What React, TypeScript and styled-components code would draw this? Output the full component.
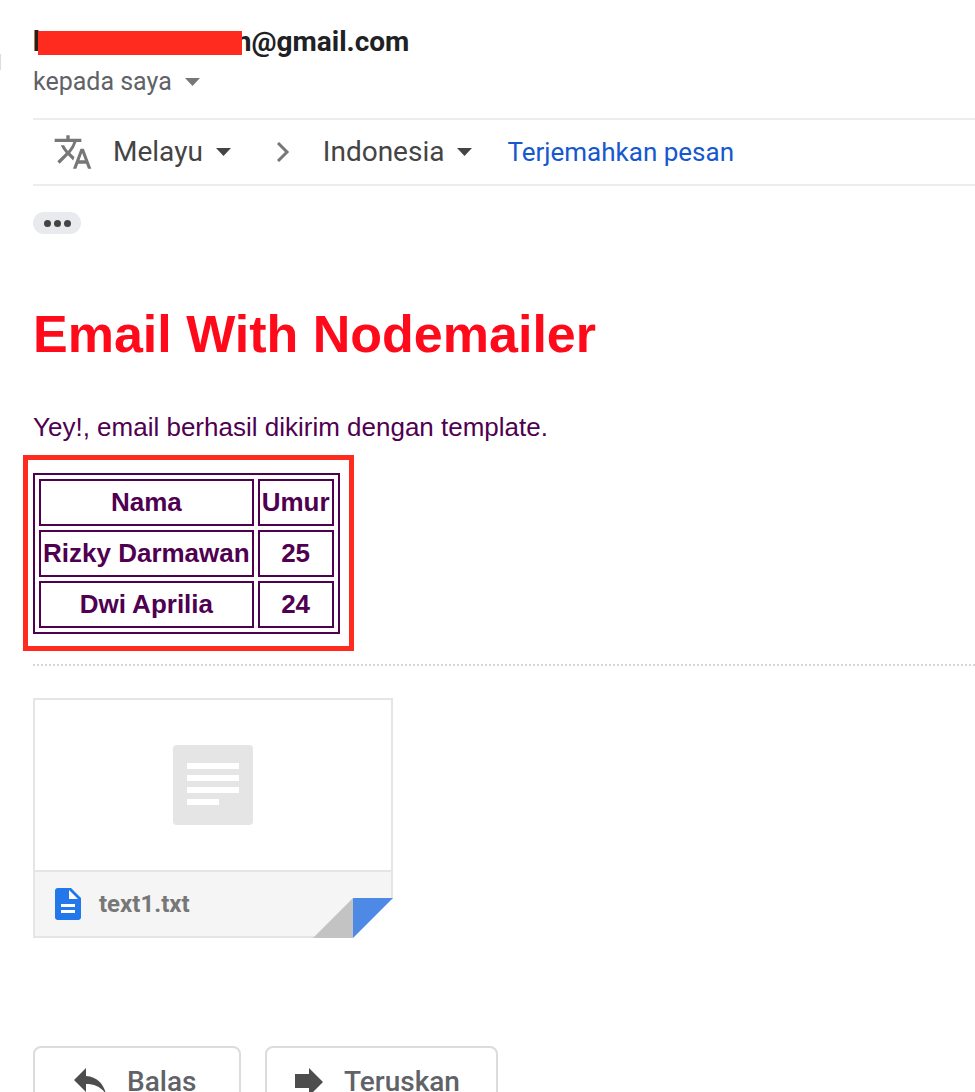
import React from "react";
import styled, { createGlobalStyle } from "styled-components";

const GlobalStyle = createGlobalStyle`
  *, *::before, *::after { box-sizing: border-box; }
  body { margin: 0; background: #fff; font-family: Roboto, sans-serif; color: #222; }
`;

const Page = styled.main`
  height: 100vh;
  overflow-y: auto;
  overflow-x: hidden;
  scrollbar-width: none;
  padding: 24px 0 0 33px;
`;

const Header = styled.header`
  position: relative;
  display: flex;
  flex-direction: column;
`;

const AvatarEdge = styled.span`
  position: absolute;
  left: -33px;
  top: 30px;
  width: 1px;
  height: 16px;
  background: #dcdcdc;
`;

const Sender = styled.h2`
  margin: 0;
  font-size: 28px;
  line-height: 36px;
  font-weight: 700;
  color: #202124;
  white-space: nowrap;
`;

const Redaction = styled.span`
  position: relative;
  display: inline-block;
  width: 204px;
  height: 24px;
  margin: 0 -6px 0 -11px;
  vertical-align: -4px;
  background: #fe2b1e;
`;

const Recipient = styled.button`
  display: flex;
  align-items: center;
  align-self: flex-start;
  gap: 13px;
  margin-top: 6px;
  padding: 0;
  border: 0;
  background: none;
  font: 400 25px/32px Roboto, sans-serif;
  color: #5f6368;
`;

const TranslateBar = styled.section`
  display: flex;
  align-items: center;
  height: 68px;
  margin-top: 20px;
  padding-left: 20px;
  border-top: 2px solid #ebeef1;
  border-bottom: 2px solid #ebeef1;
`;

const LanguageField = styled.label`
  position: relative;
  display: flex;
  align-items: center;
  gap: 13px;
`;

const Language = styled.select`
  appearance: none;
  field-sizing: content;
  padding: 0;
  border: 0;
  background: none;
  font: 400 28px/36px Roboto, sans-serif;
  color: #444;
`;

const TranslateIcon = styled.svg`
  width: 40px;
  height: 40px;
  margin-right: 20px;
  fill: #777;
`;

const ChevronIcon = styled.svg`
  width: 14px;
  height: 20px;
  margin: 0 33px 0 45px;
  fill: none;
  stroke: #777;
  stroke-width: 3;
`;

const TranslateLink = styled.a`
  margin-left: 35px;
  font-size: 26px;
  line-height: 36px;
  color: #1558d0;
  text-decoration: none;
  white-space: nowrap;
`;

const MoreButton = styled.button`
  display: flex;
  align-items: center;
  justify-content: center;
  gap: 3px;
  width: 48px;
  height: 22px;
  margin-top: 26px;
  padding: 0;
  border: 0;
  border-radius: 11px;
  background: #e8eaed;
`;

const Dot = styled.span`
  width: 7px;
  height: 7px;
  border-radius: 50%;
  background: #444;
`;

const Message = styled.article`
  padding: 61px 0 30px;
  border-bottom: 2px dotted #d8d8d8;
  font-family: "Liberation Sans", Arial, sans-serif;
  font-size: 26px;
  line-height: 39px;
  color: #500050;
`;

const Title = styled.h1`
  margin: 0;
  font-size: 52px;
  line-height: 78px;
  font-weight: 700;
  color: #ff0a1a;
`;

const Paragraph = styled.p`
  margin: 35px 0 26px;
`;

const Highlight = styled.div`
  position: relative;
  width: fit-content;

  &::after {
    content: "";
    position: absolute;
    inset: -18px -14px -17px -10px;
    border: 5px solid #fe2b1e;
    pointer-events: none;
  }
`;

const Table = styled.table`
  border: 2px solid #500050;
  border-collapse: separate;
  border-spacing: 4px;

  th {
    padding: 2px;
    border: 2px solid #500050;
    font-weight: 700;
    text-align: center;
    white-space: nowrap;
  }
`;

const Attachment = styled.a`
  position: relative;
  display: flex;
  flex-direction: column;
  width: 360px;
  height: 240px;
  margin-top: 32px;
  border: 2px solid #e5e5e5;
  color: #777;
  text-decoration: none;
`;

const Preview = styled.div`
  display: flex;
  flex: 1;
  align-items: center;
  justify-content: center;
`;

const FileBar = styled.div`
  display: flex;
  align-items: center;
  gap: 18px;
  height: 66px;
  padding-left: 20px;
  border-top: 2px solid #e5e5e5;
  background: #f5f5f5;
  font-size: 24px;
  font-weight: 700;
`;

const Fold = styled.svg`
  position: absolute;
  right: -2px;
  bottom: -2px;
  width: 80px;
  height: 40px;
`;

const Actions = styled.footer`
  display: flex;
  gap: 24px;
  margin-top: 108px;
`;

const Action = styled.button<{ $inset: number; $width: number }>`
  display: flex;
  align-items: center;
  gap: 21px;
  min-width: ${(p) => p.$width}px;
  height: 72px;
  padding: 0 0 0 ${(p) => p.$inset}px;
  border: 2px solid #dadce0;
  border-radius: 8px;
  background: #fff;
  font: 500 28px/36px Roboto, sans-serif;
  color: #5f6368;

  svg { fill: #4d4d4d; }
`;

const Caret = ({ color }: { color: string }) => (
  <svg width="15" height="8" viewBox="0 0 16 8" preserveAspectRatio="none" aria-hidden="true">
    <path d="M0 0h16L8 8z" fill={color} />
  </svg>
);

const people = [
  ["Rizky Darmawan", "25"],
  ["Dwi Aprilia", "24"],
];

export default function App() {
  return (
    <Page>
      <GlobalStyle />
      <Header>
        <AvatarEdge />
        <Sender>h<Redaction />n@gmail.com</Sender>
        <Recipient type="button">kepada saya <Caret color="#777" /></Recipient>
      </Header>

      <TranslateBar>
        <TranslateIcon viewBox="0 0 24 24" aria-hidden="true">
          <path d="M12.87 15.07l-2.54-2.51.03-.03A17.52 17.52 0 0 0 14.07 6H17V4h-7V2H8v2H1v1.99h11.17C11.5 7.92 10.44 9.75 9 11.35 8.07 10.32 7.3 9.19 6.69 8h-2c.73 1.63 1.73 3.17 2.98 4.56l-5.09 5.02L4 19l5-5 3.11 3.11.76-2.04zM18.5 10h-2L12 22h2l1.12-3h4.75L21 22h2l-4.5-12zm-2.62 7l1.62-4.33L19.12 17h-3.24z" />
        </TranslateIcon>
        <LanguageField>
          <Language aria-label="Melayu" defaultValue="Melayu"><option>Melayu</option></Language>
          <Caret color="#444" />
        </LanguageField>
        <ChevronIcon viewBox="0 0 14 20" aria-hidden="true"><path d="M2 1l9 9-9 9" /></ChevronIcon>
        <LanguageField>
          <Language aria-label="Indonesia" defaultValue="Indonesia"><option>Indonesia</option></Language>
          <Caret color="#444" />
        </LanguageField>
        <TranslateLink href="#translate">Terjemahkan pesan</TranslateLink>
      </TranslateBar>

      <MoreButton type="button" aria-label="More"><Dot /><Dot /><Dot /></MoreButton>

      <Message>
        <Title>Email With Nodemailer</Title>
        <Paragraph>Yey!, email berhasil dikirim dengan template.</Paragraph>
        <Highlight>
          <Table>
            <thead><tr><th scope="col">Nama</th><th scope="col">Umur</th></tr></thead>
            <tbody>
              {people.map(([name, age]) => (
                <tr key={name}><th scope="row">{name}</th><th>{age}</th></tr>
              ))}
            </tbody>
          </Table>
        </Highlight>
      </Message>

      <Attachment href="#text1">
        <Preview>
          <svg width="80" height="80" viewBox="0 0 80 80" aria-hidden="true">
            <rect width="80" height="80" rx="4" fill="#e5e5e5" />
            <path d="M14 18h52v6H14zM14 30h52v6H14zM14 42h52v6H14zM14 54h32v6H14z" fill="#fff" />
          </svg>
        </Preview>
        <FileBar>
          <svg width="26" height="32" viewBox="0 0 26 32" aria-hidden="true">
            <path d="M3 0h13l10 10v19a3 3 0 0 1-3 3H3a3 3 0 0 1-3-3V3a3 3 0 0 1 3-3z" fill="#2277ea" />
            <path d="M14 2v9h9zM6 16h14v3H6zM6 22h14v3H6z" fill="#fff" />
          </svg>
          text1.txt
        </FileBar>
        <Fold viewBox="0 0 80 40" aria-hidden="true">
          <path d="M80 0v40H40z" fill="#fff" />
          <path d="M40 0v40H0z" fill="#c3c3c3" />
          <path d="M40 0h40L40 40z" fill="#4d89e5" />
        </Fold>
      </Attachment>

      <Actions>
        <Action type="button" $inset={39} $width={208}>
          <svg width="32" height="28" viewBox="0 0 32 28" aria-hidden="true">
            <path d="M12 8V0L0 12l12 12v-8c9 0 15 3 20 10C30 17 24 9 12 8z" />
          </svg>
          Balas
        </Action>
        <Action type="button" $inset={28} $width={233}>
          <svg width="28" height="28" viewBox="0 0 28 28" aria-hidden="true">
            <path d="M14 0l14 14-14 14v-8H0V6h14z" />
          </svg>
          Teruskan
        </Action>
      </Actions>
    </Page>
  );
}
